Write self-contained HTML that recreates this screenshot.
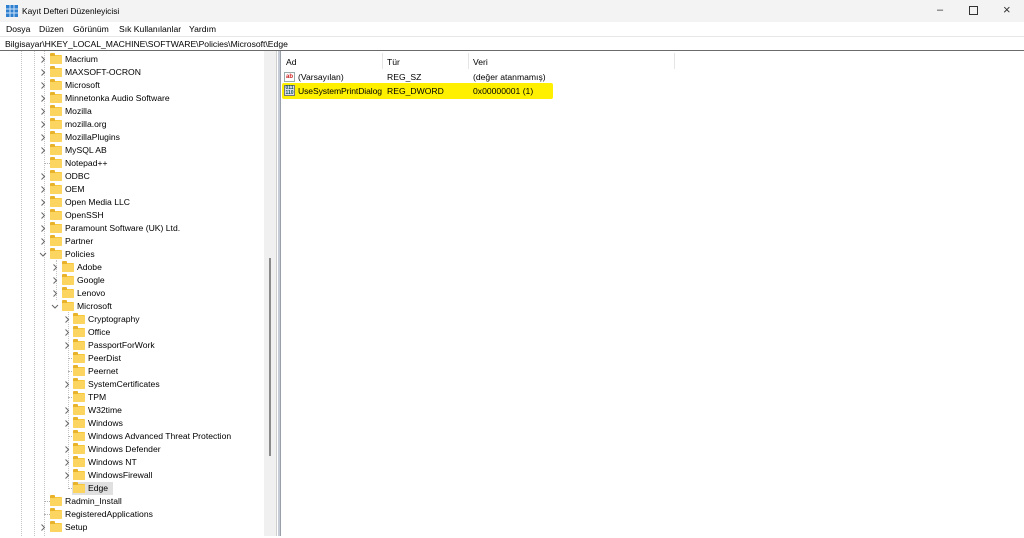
<!DOCTYPE html>
<html><head><meta charset="utf-8"><style>
*{margin:0;padding:0;box-sizing:border-box}
body{width:1024px;height:536px;overflow:hidden;background:#fff;font-family:"Liberation Sans",sans-serif;font-size:8.6px;color:#000;position:relative}
.a{position:absolute;white-space:nowrap}
.row{position:absolute;height:13px;line-height:13px;white-space:nowrap}
.f{position:absolute;width:12px;height:9px;top:2px;background:#f8c73a;border-radius:1px}
.f:before{content:"";position:absolute;left:0;top:-2px;width:5px;height:3px;background:#e8b22a;border-radius:1px 1px 0 0}
.f:after{content:"";position:absolute;left:0;top:1px;width:12px;height:8px;background:#fcd561;border-radius:1px}
.ch{position:absolute;top:0;width:8px;height:13px}
.vl{position:absolute;width:0;border-left:1px dotted #c4c4c4}
.hl{position:absolute;height:0;width:6px;border-top:1px dotted #b0b0b0;top:6px}
</style></head><body>
<div class="a" style="left:0;top:0;width:1024px;height:22px;background:#f3f3f3"></div>
<svg class="a" style="left:6px;top:5px" width="12" height="12" viewBox="0 0 12 12"><rect x="0" y="0" width="12" height="12" fill="#2f7fd0"/><path d="M0 4h12M0 8h12M4 0v12M8 0v12" stroke="#cde4f8" stroke-width="1"/></svg>
<div class="a" style="left:22px;top:6px;font-size:8.4px">Kayıt Defteri Düzenleyicisi</div>
<div class="a" style="left:937px;top:4px;font-size:11px;color:#333">&#8211;</div>
<div class="a" style="left:969px;top:6px;width:9px;height:9px;border:1px solid #333"></div>
<div class="a" style="left:1003px;top:2px;font-size:13px;color:#333">×</div>
<div class="a" style="left:0;top:22px;width:1024px;height:15px;background:#fff"></div>
<div class="a" style="left:6px;top:24px">Dosya</div>
<div class="a" style="left:39px;top:24px">Düzen</div>
<div class="a" style="left:73px;top:24px">Görünüm</div>
<div class="a" style="left:119px;top:24px">Sık Kullanılanlar</div>
<div class="a" style="left:189px;top:24px">Yardım</div>
<div class="a" style="left:0;top:36px;width:1024px;height:1px;background:#e8e8e8"></div>
<div class="a" style="left:5px;top:39px">Bilgisayar\HKEY_LOCAL_MACHINE\SOFTWARE\Policies\Microsoft\Edge</div>
<div class="a" style="left:0;top:50px;width:1024px;height:1px;background:#6b6b6b"></div>
<div class="a" style="left:264px;top:51px;width:12px;height:485px;background:#f0f0f0"></div>
<div class="a" style="left:269px;top:258px;width:2px;height:198px;background:#8a8a8a"></div>
<div class="a" style="left:276px;top:51px;width:1px;height:485px;background:#d0d0d0"></div>
<div class="a" style="left:278px;top:51px;width:2px;height:485px;background:#c4cad6"></div>
<div class="a" style="left:280px;top:51px;width:1px;height:485px;background:#9aa0aa"></div>
<div class="vl" style="left:21px;top:51px;height:485px"></div>
<div class="vl" style="left:34px;top:51px;height:485px"></div>
<div class="vl" style="left:44px;top:51px;height:485px"></div>
<div class="vl" style="left:56px;top:260px;height:40px"></div>
<div class="vl" style="left:68px;top:312px;height:175px"></div>
<div id="tree"></div>
<div class="a" style="left:286px;top:57px">Ad</div>
<div class="a" style="left:387px;top:57px">Tür</div>
<div class="a" style="left:473px;top:57px">Veri</div>
<div class="a" style="left:382px;top:53px;width:1px;height:16px;background:#e5e5e5"></div>
<div class="a" style="left:468px;top:53px;width:1px;height:16px;background:#e5e5e5"></div>
<div class="a" style="left:674px;top:53px;width:1px;height:16px;background:#e5e5e5"></div>
<div class="a" style="left:284px;top:72px;width:11px;height:10px;border:1px solid #9aa;background:#fff;font-size:6px;line-height:8px;color:#c22;font-weight:bold;text-align:center">ab</div>
<div class="a" style="left:298px;top:72px">(Varsayılan)</div>
<div class="a" style="left:387px;top:72px">REG_SZ</div>
<div class="a" style="left:473px;top:72px">(değer atanmamış)</div>
<div class="a" style="left:282px;top:83px;width:271px;height:16px;background:#fff000;border-radius:2px"></div>
<div class="a" style="left:284px;top:85px;width:11px;height:11px;border:1px solid #777;background:#dde;font-size:5px;line-height:5px;color:#155;text-align:center;font-weight:bold">011<br>110</div>
<div class="a" style="left:298px;top:86px;letter-spacing:-0.1px">UseSystemPrintDialog</div>
<div class="a" style="left:387px;top:86px">REG_DWORD</div>
<div class="a" style="left:473px;top:86px">0x00000001 (1)</div>
<script>
var rows=[
[1,'r','Macrium'],[1,'r','MAXSOFT-OCRON'],[1,'r','Microsoft'],[1,'r','Minnetonka Audio Software'],[1,'r','Mozilla'],[1,'r','mozilla.org'],[1,'r','MozillaPlugins'],[1,'r','MySQL AB'],[1,'n','Notepad++'],[1,'r','ODBC'],[1,'r','OEM'],[1,'r','Open Media LLC'],[1,'r','OpenSSH'],[1,'r','Paramount Software (UK) Ltd.'],[1,'r','Partner'],[1,'d','Policies'],
[2,'r','Adobe'],[2,'r','Google'],[2,'r','Lenovo'],[2,'d','Microsoft'],
[3,'r','Cryptography'],[3,'r','Office'],[3,'r','PassportForWork'],[3,'n','PeerDist'],[3,'n','Peernet'],[3,'r','SystemCertificates'],[3,'n','TPM'],[3,'r','W32time'],[3,'r','Windows'],[3,'n','Windows Advanced Threat Protection'],[3,'r','Windows Defender'],[3,'r','Windows NT'],[3,'r','WindowsFirewall'],[3,'s','Edge'],
[1,'n','Radmin_Install'],[1,'n','RegisteredApplications'],[1,'r','Setup']];
var R='<svg width="8" height="13" viewBox="0 0 8 13"><path d="M2.5 3.5L5.5 6.5L2.5 9.5" fill="none" stroke="#666" stroke-width="1"/></svg>';
var D='<svg width="8" height="13" viewBox="0 0 8 13"><path d="M1 5L4 8L7 5" fill="none" stroke="#666" stroke-width="1"/></svg>';
var h='';
rows.forEach(function(r,i){
 var L=r[0],top=53+13*i,cx=39+12*(L-1),fx=50+12*(L-1)-(L==3?1:0),tx=65+12*(L-1)-(L==3?1:0);
 h+='<div class="row" style="left:0;top:'+top+'px;width:264px">';
 if(r[1]=='r')h+='<div class="ch" style="left:'+cx+'px">'+R+'</div>';
 else if(r[1]=='d')h+='<div class="ch" style="left:'+cx+'px">'+D+'</div>';
 else h+='<div class="hl" style="left:'+(cx+5)+'px"></div>';
 if(r[1]=='s')h+='<div style="position:absolute;left:'+(fx-1)+'px;top:0;width:'+(tx-fx+26)+'px;height:13px;background:#e0e0e0"></div>';
 h+='<div class="f" style="left:'+fx+'px"></div><div style="position:absolute;left:'+tx+'px;top:0">'+r[2]+'</div></div>';
});
document.getElementById('tree').innerHTML=h;
</script>
</body></html>
